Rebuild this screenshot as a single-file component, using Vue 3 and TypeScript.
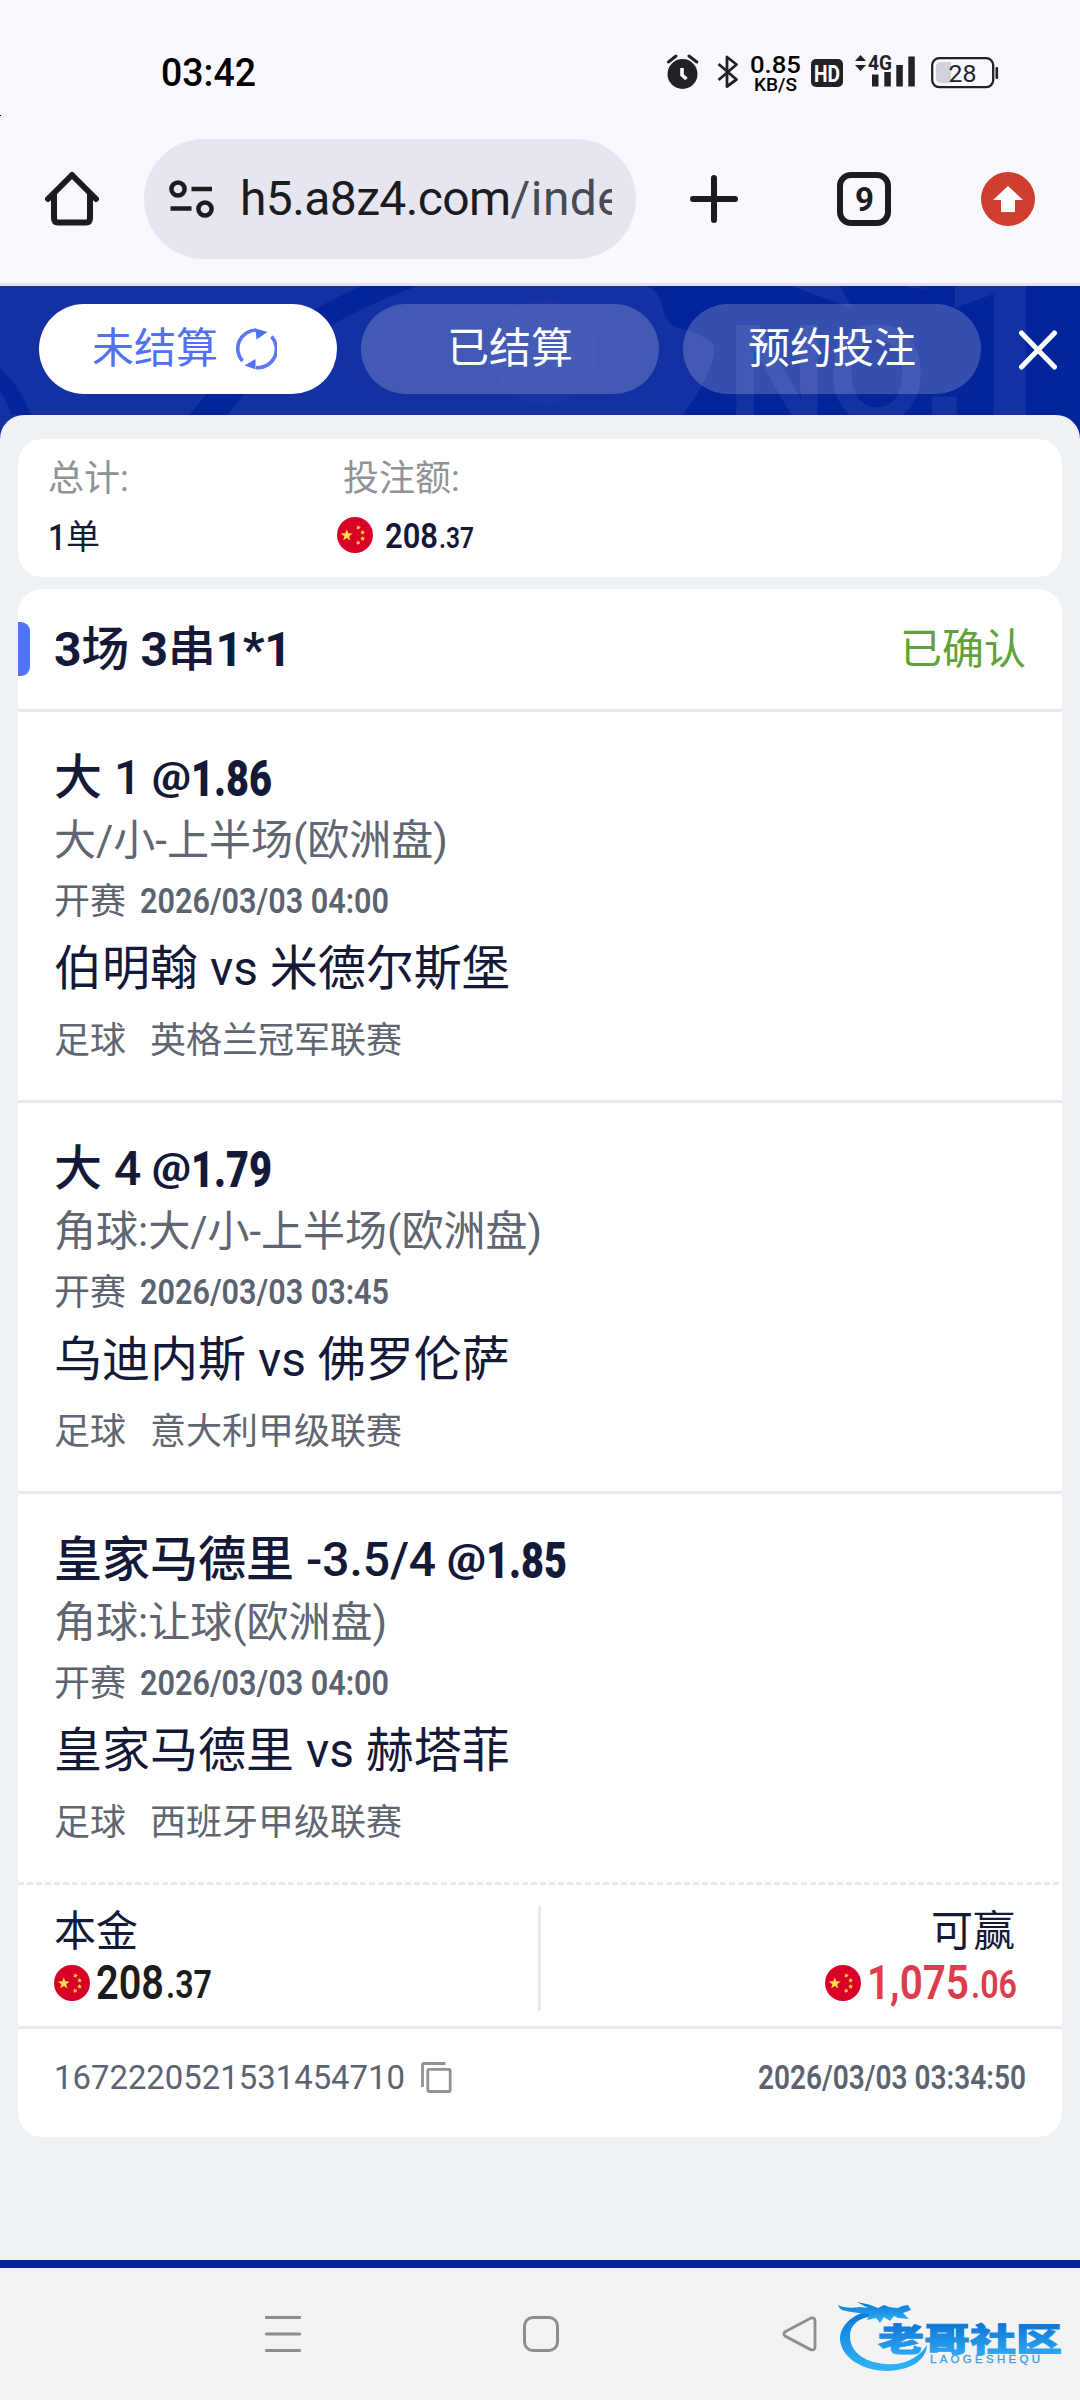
<script setup lang="ts">
import { h } from 'vue'

interface Leg {
  pick: string
  odds: string
  market: string
  time: string
  teams: string
  league: string
}

const legs: Leg[] = [
  { pick: '大 1', odds: '1.86', market: '大/小-上半场(欧洲盘)', time: '2026/03/03 04:00', teams: '伯明翰 vs 米德尔斯堡', league: '英格兰冠军联赛' },
  { pick: '大 4', odds: '1.79', market: '角球:大/小-上半场(欧洲盘)', time: '2026/03/03 03:45', teams: '乌迪内斯 vs 佛罗伦萨', league: '意大利甲级联赛' },
  { pick: '皇家马德里 -3.5/4', odds: '1.85', market: '角球:让球(欧洲盘)', time: '2026/03/03 04:00', teams: '皇家马德里 vs 赫塔菲', league: '西班牙甲级联赛' },
]

/* Narrow numeric label: cap is the digit height, w the full advance width. */
const Num = (p: { t: string; w: number; cap: number; weight?: number }) =>
  h('svg', { width: p.w, height: p.cap, style: 'overflow:visible;display:block;flex:none' }, [
    h('text', {
      x: 0, y: p.cap, textLength: p.w, lengthAdjust: 'spacingAndGlyphs', fill: 'currentColor',
      'font-family': 'Roboto, sans-serif', 'font-size': p.cap / 0.711, 'font-weight': p.weight ?? 500,
    }, p.t),
  ])
Num.props = ['t', 'w', 'cap', 'weight']

const star = (cx: number, cy: number, r: number, turn = 0): string =>
  Array.from({ length: 10 }, (_, i) => {
    const a = ((i * 36 - 90 + turn) * Math.PI) / 180
    const q = i % 2 ? r * 0.42 : r
    return `${(cx + q * Math.cos(a)).toFixed(2)},${(cy + q * Math.sin(a)).toFixed(2)}`
  }).join(' ')

const Flag = () =>
  h('svg', { width: 36, height: 36, viewBox: '0 0 36 36', style: 'display:block;flex:none' }, [
    h('circle', { cx: 18, cy: 18, r: 18, fill: '#d80027' }),
    h('polygon', { points: star(9.8, 18.4, 6.2), fill: '#ffda44' }),
    h('polygon', { points: star(21.4, 10.6, 2.6, 20), fill: '#ffda44' }),
    h('polygon', { points: star(25.6, 15.4, 2.6, 10), fill: '#ffda44' }),
    h('polygon', { points: star(25.6, 21.6, 2.6, -10), fill: '#ffda44' }),
    h('polygon', { points: star(21.2, 25.8, 2.6, -20), fill: '#ffda44' }),
  ])
</script>

<template>
  <div class="phone">
    <div class="tick"></div>
    <header class="status">
      <div class="clock"><Num t="03:42" :w="95" :cap="27" /></div>
      <div class="sys">
        <svg class="s-alarm" width="32" height="36" viewBox="0 0 32 36">
          <circle cx="15.5" cy="20" r="15" fill="#222226" />
          <path d="M1.5 8 L9 2 M22 2 L29.8 8" stroke="#222226" stroke-width="3" stroke-linecap="round" />
          <path d="M15 14 V21 L19.5 25" fill="none" stroke="#f9f8fe" stroke-width="3.6" />
        </svg>
        <svg class="s-bt" width="22" height="36" viewBox="0 0 22 36">
          <path d="M1.5 10 L19.5 25.5 L10 32.5 V3 L19.5 10.5 L1.5 26" fill="none" stroke="#222226" stroke-width="2.8" stroke-linejoin="round" />
        </svg>
        <div class="s-rate">
          <Num t="0.85" :w="51" :cap="17.5" />
          <Num t="KB/S" :w="43" :cap="13.5" />
        </div>
        <div class="s-hd"><Num t="HD" :w="26" :cap="16.5" :weight="700" /></div>
        <svg class="s-cell" width="62" height="36" viewBox="0 0 62 36">
          <path d="M0 7 L5.5 1 L11 7Z M0 11 H11 L5.5 17Z" fill="#222226" />
          <text x="13" y="16" font-size="21" font-weight="700" textLength="24" lengthAdjust="spacingAndGlyphs" fill="#222226" font-family="Roboto, sans-serif">4G</text>
          <path d="M17 20.5h6.500v12h-6.500z M29.300 18h6.500v14.500h-6.500z M41.300 11h6.500v21.500h-6.500z M53.300 2.500h6.500v30h-6.500z" fill="#222226" />
        </svg>
        <svg class="s-batt" width="68" height="32" viewBox="0 0 68 32">
          <rect x="1.200" y="1.200" width="61" height="29" rx="7" fill="none" stroke="#222226" stroke-width="2.300" />
          <path d="M20 5 H10 Q5 5 5 10 V21 Q5 26 10 26 H20Z" fill="#d3d1da" />
          <rect x="64.500" y="10" width="2.600" height="12" rx="1" fill="#222226" />
          <text x="17.500" y="24.500" font-size="24.500" textLength="28" lengthAdjust="spacingAndGlyphs" fill="#222226" font-family="Roboto, sans-serif">28</text>
        </svg>
      </div>
    </header>

    <nav class="browser">
      <svg class="home" width="56" height="56" viewBox="0 0 56 56">
        <path d="M4 28 L28 4 L52 28 M10 23 V47 Q10 51.500 14 51.500 H42 Q46 51.500 46 47 V23" fill="none" stroke="#1b1b20" stroke-width="6" stroke-linecap="round" stroke-linejoin="round" />
      </svg>
      <div class="pill">
        <svg class="tune" width="46" height="38" viewBox="0 0 46 38">
          <g fill="none" stroke="#1b1b20" stroke-width="4.500">
            <circle cx="9" cy="9" r="6.600" /><path d="M22.500 9 H43" />
            <circle cx="36" cy="29" r="6.600" /><path d="M1.500 28.500 H22.500" />
          </g>
        </svg>
        <div class="url"><span>h5.a8z4.com</span><i>/index</i></div>
      </div>
      <svg class="plus" width="48" height="48" viewBox="0 0 48 48">
        <path d="M24 3 V45 M3 24 H45" stroke="#1b1b20" stroke-width="6" stroke-linecap="round" />
      </svg>
      <div class="tabs-btn"><Num t="9" :w="19" :cap="23.5" :weight="700" /></div>
      <svg class="update" width="54" height="54" viewBox="0 0 54 54">
        <circle cx="27" cy="27" r="27" fill="#d03e30" />
        <path d="M27 14 L42 28 H34 V40 H20 V28 H12Z" fill="#fff" />
      </svg>
    </nav>

    <section class="hero">
      <svg class="pattern" width="1080" height="160" viewBox="0 0 1080 160">
        <rect width="1080" height="160" fill="#03249b" />
        <g fill="#1431a3">
          <path d="M0 0 H647 C657 4 662 14 664 27 C668 38 674 41 685 44 C700 49 712 53 714 61 C716 71 706 98 683 129 V160 H0Z" />
          <path d="M791 0 H840 L852 22Z" />
          <path d="M905 0 L936 6 L915 0Z" />
          <text x="727" y="135" font-family="Liberation Sans, sans-serif" font-weight="700" font-size="139" textLength="100" lengthAdjust="spacingAndGlyphs">N</text>
          <text x="828" y="136" font-family="Liberation Sans, sans-serif" font-weight="700" font-size="139" textLength="98" lengthAdjust="spacingAndGlyphs">O</text>
          <text x="920" y="137" font-family="Liberation Sans, sans-serif" font-weight="700" font-size="176">.</text>
          <text x="936" y="152" font-family="Roboto, sans-serif" font-weight="700" font-size="262" textLength="132" lengthAdjust="spacingAndGlyphs">1</text>
        </g>
        <g fill="#03249b">
          <path d="M361 0 Q255 48 189 129 L227 129 Q292 45 417 0Z" />
          <path d="M0 82 Q20 100 31 129 H11 Q6 113 0 106Z" />
        </g>
        <circle cx="545" cy="66" r="53" fill="#1733a4" />
      </svg>
      <div class="tab on">
        <span>未结算</span>
        <svg width="41" height="42" viewBox="0 0 41 42">
          <path d="M20 2 A18.600 18.600 0 0 0 6.500 33 M35.500 8.500 A18.600 18.600 0 0 1 20 39.600" fill="none" stroke="#5b78f2" stroke-width="3.600" />
          <path d="M19.500 0.500 L31.500 4 L20.500 11.500Z M8.500 37.500 L19.500 31 V41.200Z" fill="#4f70f5" />
        </svg>
      </div>
      <div class="tab"><span>已结算</span></div>
      <div class="tab"><span>预约投注</span></div>
      <svg class="close" width="38" height="40" viewBox="0 0 38 40">
        <path d="M2.500 3 L35.500 37 M35.500 3 L2.500 37" stroke="#fff" stroke-width="5" stroke-linecap="round" />
      </svg>
    </section>

    <main class="sheet">
      <section class="summary">
        <div class="col c1">
          <div class="lab">总计:</div>
          <div class="val"><Num t="1" :w="18" :cap="26" /><span class="dan">单</span></div>
        </div>
        <div class="col">
          <div class="lab l2">投注额:</div>
          <div class="val v2"><Flag /><div class="amt"><Num t="208" :w="53" :cap="25" :weight="600" /><Num t=".37" :w="35" :cap="20.5" :weight="600" /></div></div>
        </div>
      </section>

      <section class="bet">
        <div class="bet-head">
          <i class="bar"></i>
          <h2>3<span>场</span> 3<span>串</span>1*1</h2>
          <span class="ok">已确认</span>
        </div>
        <article v-for="leg in legs" :key="leg.teams" class="leg">
          <div class="pick">
            <b>{{ leg.pick }}</b>
            <div class="odds"><Num class="at" t="@" :w="39" :cap="27.500" :weight="800" /><Num :t="leg.odds" :w="81" :cap="36" :weight="900" /></div>
          </div>
          <div class="market">{{ leg.market }}</div>
          <div class="start"><span>开赛</span><Num class="when" :t="leg.time" :w="249" :cap="25.500" :weight="600" /></div>
          <div class="teams">{{ leg.teams }}</div>
          <div class="league"><span>足球</span><span>{{ leg.league }}</span></div>
        </article>
        <svg class="dash" width="1044" height="3"><path d="M0 1.500 H1044" stroke="#e8eaef" stroke-width="3" stroke-dasharray="6 3" /></svg>
        <div class="money">
          <div class="side">
            <div class="cap">本金</div>
            <div class="row"><Flag /><div class="amt big"><Num t="208" :w="68" :cap="34.500" :weight="600" /><Num class="dec" t=".37" :w="46" :cap="27.500" :weight="600" /></div></div>
          </div>
          <i class="split"></i>
          <div class="side right">
            <div class="cap">可赢</div>
            <div class="row red"><Flag /><div class="amt big"><Num t="1,075" :w="102" :cap="34.500" :weight="600" /><Num class="dec" t=".06" :w="46" :cap="27.500" :weight="600" /></div></div>
          </div>
        </div>
        <footer class="foot">
          <Num t="1672220521531454710" :w="351" :cap="24" :weight="400" />
          <svg class="copy" width="31" height="31" viewBox="0 0 31 31">
            <g fill="none" stroke="#8f9296" stroke-width="2.800"><rect x="6.800" y="7.300" width="22.400" height="22.200" rx="1.500" /><path d="M1.500 25 V3 Q1.500 1.500 3 1.500 H24.500" /></g>
          </svg>
          <div class="stamp"><Num t="2026/03/03 03:34:50" :w="268" :cap="24" :weight="600" /></div>
        </footer>
      </section>
    </main>

    <nav class="keys">
      <svg class="k-menu" width="36" height="36" viewBox="0 0 36 36"><path d="M1.500 1.500 H34.500 M1.500 18 H34.500 M1.500 34.500 H34.500" stroke="#8e8e8e" stroke-width="3.200" stroke-linecap="round" /></svg>
      <svg class="k-home" width="36" height="36" viewBox="0 0 36 36"><rect x="1.500" y="1.500" width="33" height="33" rx="8.500" fill="none" stroke="#8e8e8e" stroke-width="3" /></svg>
      <svg class="k-back" width="35" height="36" viewBox="0 0 35 36"><path d="M3 15.800 L28.500 2.200 Q33 1 33 5 V31 Q33 35 28.500 33.600 L3 20 Q0.800 18 3 15.800Z" fill="none" stroke="#8e8e8e" stroke-width="2.800" /></svg>
      <svg class="logo" width="226" height="80" viewBox="0 0 226 80">
        <defs>
          <linearGradient id="lg" x1="0" y1="0" x2="0" y2="1"><stop offset="0" stop-color="#0b78dc" /><stop offset="1" stop-color="#32b4f5" /></linearGradient>
          <linearGradient id="lt" x1="0" y1="0" x2="0" y2="1"><stop offset="0.200" stop-color="#0c74d8" /><stop offset="0.900" stop-color="#2fa9f2" /></linearGradient>
        </defs>
        <g fill="url(#lg)">
          <path d="M29 15 C10 21 2 32 2 43 C3 62 25 75 50 75 C72 74 88 65 89 49 C80 63 64 70 47 68 C25 66 12 55 12 40 C12 29 20 22 35 20Z" />
          <path d="M0 9 Q8 13 22 11 L30 12 L19 6 Q32 8 40 12 L46 9 Q52 12 60 12 L64 10 L70 9 L73 14 L65 17 L71 23 L60 22 L56 20 L52 25 L46 21 L42 27 L38 22 L29 24 L32 18 Q17 17 8 15 Q1 14 0 9Z" />
        </g>
        <text x="40" y="55" font-family="'Noto Sans CJK SC', sans-serif" font-weight="900" font-size="32" textLength="184" lengthAdjust="spacingAndGlyphs" fill="url(#lt)" stroke="url(#lt)" stroke-width="0.900">老哥社区</text>
        <text x="92" y="67" font-family="'Liberation Sans', sans-serif" font-size="11.500" textLength="110" fill="#3c9fe4" stroke="#3c9fe4" stroke-width="0.300">LAOGESHEQU</text>
      </svg>
    </nav>
  </div>
</template>

<style>
body { margin: 0; background: #eef2f5; }
</style>
<style scoped>
.phone { width: 1080px; height: 2400px; position: relative; overflow: hidden; background: #f9f8fe; display: flex; flex-direction: column; font-family: Roboto, 'Noto Sans CJK SC', sans-serif; color: #141937; }
.phone svg { display: block; flex: none; }
.tick { position: absolute; left: 0; top: 115px; width: 1px; height: 1px; background: #000; }
.status { height: 139px; display: flex; align-items: flex-start; flex: none; box-sizing: border-box; padding: 54px 0 0 161px; color: #000; }
.clock { padding-top: 5px; width: 506px; }
.sys { display: flex; }
.s-bt { margin-left: 18px; }
.s-rate { margin-left: 11px; width: 51px; padding-top: 1px; display: flex; flex-direction: column; gap: 4px; align-items: center; }
.s-hd { margin: 5px 0 0 10px; width: 32px; height: 28px; border-radius: 5px; background: #222226; color: #fff; display: flex; align-items: center; justify-content: center; }
.s-cell { margin-left: 12px; }
.s-batt { margin: 3px 0 0 14px; }
.browser { height: 144px; display: flex; align-items: flex-start; flex: none; border-bottom: 3px solid #e2e2ee; }
.home { margin: 32px 0 0 44px; }
.pill { margin-left: 44px; width: 492px; height: 120px; border-radius: 60px; background: #e6e6f0; display: flex; align-items: center; box-sizing: border-box; padding-left: 25px; }
.url { margin-left: 25px; width: 372px; overflow: hidden; white-space: nowrap; font-size: 48px; line-height: 120px; color: #1b1b20; letter-spacing: -0.6px; }
.url i { font-style: normal; color: #484a54; letter-spacing: 0.4px; }
.plus { margin: 36px 0 0 56px; }
.tabs-btn { margin: 33px 0 0 99px; width: 54px; height: 54px; box-sizing: border-box; border: 6px solid #1b1b20; border-radius: 14px; display: flex; align-items: center; justify-content: center; color: #1b1b20; }
.update { margin: 33px 0 0 90px; }
.plus { margin-left: 54px; }
.hero { height: 129px; flex: none; position: relative; display: flex; align-items: flex-start; gap: 24px; box-sizing: border-box; padding: 18px 0 0 39px; background: #03249b; }
.pattern { position: absolute; left: 0; top: 0; }
.tab { position: relative; width: 298px; height: 90px; border-radius: 45px; background: rgba(255,255,255,.2); color: #fff; display: flex; align-items: center; justify-content: center; font-size: 42px; line-height: 92px; }
.tab.on { background: #fff; color: #5271ee; justify-content: flex-start; box-sizing: border-box; padding-left: 53px; gap: 18px; }
.close { position: relative; margin: 26px 0 0 14px; }
.sheet { position: relative; height: 1845px; box-sizing: border-box; flex: none; padding: 24px 18px 0; border-radius: 24px 24px 0 0; background: #eef2f5; }
.summary { height: 138px; background: #fff; border-radius: 24px; display: flex; box-sizing: border-box; padding-top: 10px; }
.c1 { width: 301px; box-sizing: border-box; padding-left: 30px; }
.c1 + .col { padding-left: 18px; }
.lab { font-size: 36px; line-height: 60px; height: 60px; color: #8f9397; }
.l2 { padding-left: 6px; }
.val { display: flex; align-items: center; height: 56px; }
.v2 { height: 52px; }
.dan { font-size: 34px; line-height: 56px; font-weight: 400; }
.amt { display: flex; align-items: flex-end; gap: 1px; margin-left: 12px; }
.bet { margin-top: 12px; height: 1548px; background: #fff; border-radius: 24px; overflow: hidden; }
.bet-head { height: 120px; display: flex; align-items: center; border-bottom: 3px solid #e8eaf0; padding-right: 36px; }
.bar { width: 12px; height: 54px; border-radius: 0 9px 9px 0; background: #4f74ff; }
h2 { margin: 2px 0 0 24px; font-size: 48px; font-weight: 700; line-height: 70px; flex: 1; letter-spacing: -0.3px; }
h2 span { font-weight: 500; }
.ok { font-size: 42px; color: #5fa23b; margin-top: -7px; }
.leg { height: 391px; box-sizing: border-box; padding: 36px 36px 0; border-bottom: 3px solid #e8eaf0; white-space: nowrap; }
.leg:nth-of-type(3) { border-bottom: 0; height: 388px; }
.pick { height: 60px; display: flex; align-items: center; gap: 11px; }
.pick b { font-size: 48px; line-height: 62px; font-weight: 500; }
.odds { display: flex; align-items: flex-end; }
.at { margin-bottom: 7px; }
.market { height: 64px; line-height: 66px; font-size: 42px; color: #5f6672; }
.start { height: 60px; line-height: 60px; font-size: 36px; color: #5c6370; display: flex; align-items: center; gap: 14px; }
.when { margin-top: -4px; }
.teams { height: 70px; line-height: 73px; font-size: 48px; }
.league { height: 74px; line-height: 78px; font-size: 36px; color: #5f6672; display: flex; gap: 24px; }
.money { display: flex; justify-content: space-between; box-sizing: border-box; padding: 0 45px 0 36px; border-bottom: 3px solid #e8eaf0; height: 144px; }
.side { width: 470px; padding-top: 15px; }
.cap { font-size: 42px; line-height: 63px; height: 60px; }
.row { display: flex; align-items: center; height: 44px; color: #1c1c1c; padding-top: 1px; }
.big { margin-left: 6px; gap: 2px; margin-top: -3px; }
.dec { margin-bottom: 1px; }
.right { text-align: right; }
.right .cap { padding-right: 2px; }
.right .row { justify-content: flex-end; }
.red { color: #dc3c4b; }
.split { width: 3px; height: 105px; margin: 21px 0 0 8px; background: #e8eaf0; }
.foot { display: flex; align-items: center; height: 96px; padding: 0 36px 0 36px; color: #5c6370; }
.copy { margin-left: 16px; }
.stamp { margin-left: auto; }
.keys { position: relative; flex: 1; border-top: 8px solid #03249b; background: #f3f3f3; display: flex; align-items: flex-start; }
.k-menu { margin: 48px 0 0 265px; }
.k-home { margin: 48px 0 0 222px; }
.k-back { margin: 48px 0 0 223px; }
.logo { margin: 28px 0 0 21px; }
</style>
